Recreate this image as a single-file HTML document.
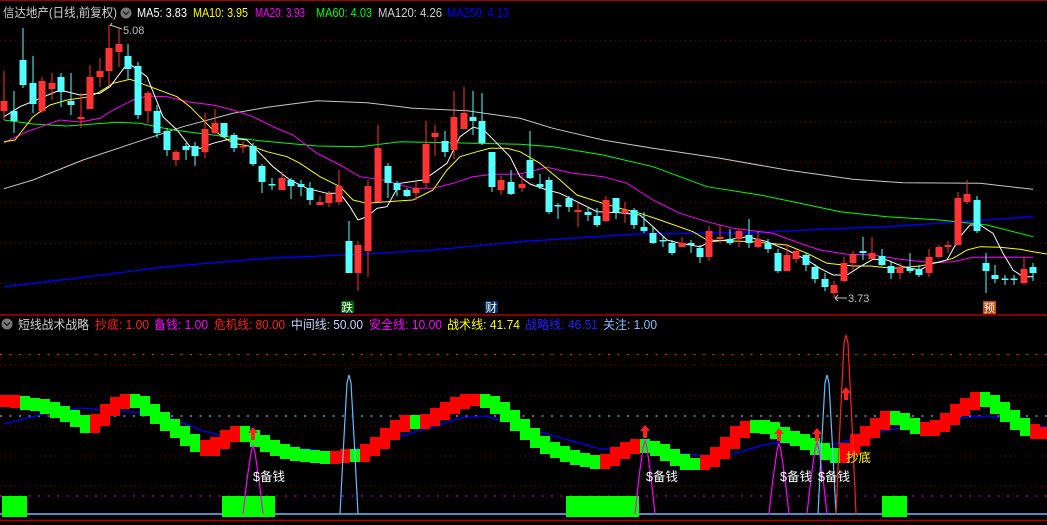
<!DOCTYPE html>
<html><head><meta charset="utf-8"><style>
html,body{margin:0;padding:0;background:#000;width:1047px;height:525px;overflow:hidden}
svg{display:block}
text{font-family:"Liberation Sans","Noto Sans CJK SC",sans-serif}
</style></head><body>
<svg id="s" width="1047" height="525" xmlns="http://www.w3.org/2000/svg">
<rect width="1047" height="525" fill="#000"/>
<line x1="0" y1="0.5" x2="1047" y2="0.5" stroke="#a00000"/>
<g id="grid"></g>
<g id="ma"></g>
<g id="cdl"></g>
<g id="low"></g>
<line x1="0" y1="315" x2="1047" y2="315" stroke="#b00000" stroke-width="1.5"/>
<line x1="0" y1="520.5" x2="1047" y2="520.5" stroke="#b00000" stroke-width="1.5"/>
<g font-size="12.5" lengthAdjust="spacingAndGlyphs">
<text x="3" y="17" fill="#d0d0d0" textLength="114" lengthAdjust="spacingAndGlyphs">信达地产(日线,前复权)</text>
<text x="137" y="17" fill="#fff" textLength="50" lengthAdjust="spacingAndGlyphs">MA5: 3.83</text>
<text x="193" y="17" fill="#ffff00" textLength="55" lengthAdjust="spacingAndGlyphs">MA10: 3.95</text>
<text x="255" y="17" fill="#ff00ff" textLength="50" lengthAdjust="spacingAndGlyphs">MA20: 3.93</text>
<text x="316" y="17" fill="#00ff00" textLength="56" lengthAdjust="spacingAndGlyphs">MA60: 4.03</text>
<text x="378" y="17" fill="#d0d0d0" textLength="64" lengthAdjust="spacingAndGlyphs">MA120: 4.26</text>
<text x="447" y="17" fill="#0000ff" textLength="62" lengthAdjust="spacingAndGlyphs">MA250: 4.13</text>
</g>
<circle cx="126" cy="13" r="5.5" fill="#777"/><path d="M123,11.5 L126,14.5 L129,11.5" stroke="#222" stroke-width="1.5" fill="none"/>
<text x="123" y="34" font-size="11" fill="#c0c0c0">5.08</text>
<path d="M110,26 L112,23 M110,25 L122,29" stroke="#c0c0c0" fill="none"/>
<text x="848" y="302" font-size="11" fill="#c0c0c0">3.73</text>
<path d="M835,298 L847,298 M835,298 L838,295 M835,298 L838,301" stroke="#c0c0c0" fill="none"/>
<rect x="341" y="301" width="13" height="12" fill="#006600"/><text x="341.5" y="311.5" font-size="11.5" fill="#fff">跌</text>
<rect x="485" y="301" width="13" height="12" fill="#003366"/><text x="485.5" y="311.5" font-size="11.5" fill="#fff">财</text>
<rect x="983" y="301" width="13" height="13" fill="#c04a10"/><text x="983.5" y="312" font-size="11.5" fill="#fff">预</text>
<circle cx="7" cy="324" r="5.5" fill="#777"/><path d="M4,322.5 L7,325.5 L10,322.5" stroke="#222" stroke-width="1.5" fill="none"/>
<g font-size="12.5">
<text x="18" y="329" fill="#d0d0d0" textLength="71" lengthAdjust="spacingAndGlyphs">短线战术战略</text>
<text x="95" y="329" fill="#ff2020" textLength="54" lengthAdjust="spacingAndGlyphs">抄底: 1.00</text>
<text x="154" y="329" fill="#ff00ff" textLength="54" lengthAdjust="spacingAndGlyphs">备钱: 1.00</text>
<text x="214" y="329" fill="#ff2020" textLength="71" lengthAdjust="spacingAndGlyphs">危机线: 80.00</text>
<text x="291" y="329" fill="#d0d0ff" textLength="72" lengthAdjust="spacingAndGlyphs">中间线: 50.00</text>
<text x="369" y="329" fill="#ff00ff" textLength="73" lengthAdjust="spacingAndGlyphs">安全线: 10.00</text>
<text x="447" y="329" fill="#ffff00" textLength="73" lengthAdjust="spacingAndGlyphs">战术线: 41.74</text>
<text x="525" y="329" fill="#2020ff" textLength="73" lengthAdjust="spacingAndGlyphs">战略线: 46.51</text>
<text x="603" y="329" fill="#80c0ff" textLength="54" lengthAdjust="spacingAndGlyphs">关注: 1.00</text>
</g>
<g id="lbl"></g>
</svg>
<script>
var NS="http://www.w3.org/2000/svg";
function el(p,t,a){var e=document.createElementNS(NS,t);for(var k in a)e.setAttribute(k,a[k]);document.getElementById(p).appendChild(e);return e;}
[40.7,81.7,121.7,162.7,202.7,243.3,283.3,365,395.7,426.3,456,486.3].forEach(function(y){el("grid","line",{x1:0,x2:1047,y1:y,y2:y,stroke:"#900000","stroke-dasharray":"1 4"});});
el("grid","line",{x1:0,x2:1047,y1:354.5,y2:354.5,stroke:"#ff2020","stroke-dasharray":"2 7.5"});
el("grid","line",{x1:0,x2:1047,y1:416,y2:416,stroke:"#d0d0ff","stroke-dasharray":"2 7.5"});
el("grid","line",{x1:0,x2:1047,y1:496,y2:496,stroke:"#ff00ff","stroke-dasharray":"2 7.5"});
el("grid","line",{x1:0,x2:1047,y1:514,y2:514,stroke:"#60c0ff","stroke-width":1.5});
function pl(g,pts,c,w){el(g,"polyline",{points:pts,stroke:c,fill:"none","stroke-width":w||1});}
pl("ma","4,188.7 33,180 83,160 133,143.3 183,126.7 233,113.3 267,107.3 317,100.7 367,102.7 413,108.3 467,110.7 520,118.3 553,128.3 603,140 653,148.3 720,158.3 787,170 853,179.3 903,182.7 980,183.3 1033,189.3","#c8c8c8");
pl("ma","4,286.7 67,279.3 167,266.7 267,258.3 367,254 433,250 520,241.7 637,234 753,232.7 820,229.3 887,226.7 953,222.3 1033,216.7","#0000ff",1.3);
pl("ma","4,120 33,124 67,126 117,122.3 140,123.3 173,130 213,135 260,140.7 317,146 360,146.7 400,141.7 450,142.7 520,144.3 553,146.7 603,155 653,166.7 707,186.7 760,195 800,203.3 840,211.7 887,216.7 940,220 987,225 1033,236.7","#00ff00");
pl("ma","4,142.7 27,131.7 60,120 80,122 100,118.3 113,110 133,100 147,96 167,96.7 187,101.7 213,105 233,110 253,116.7 273,126.7 293,135 317,153.3 340,165 360,176.7 383,180 413,188.3 433,188.3 453,183.3 473,176.7 493,174.3 520,174 547,167.3 570,172.7 603,176.7 627,183.3 653,200 680,213.3 707,221.7 733,228.3 753,230.7 773,233.3 800,243.3 820,250 847,254.3 873,255 900,259.3 933,262.7 953,261.7 973,257.3 1000,257.3 1033,257.3","#ff00ff");
pl("ma","4,141.7 15,140 33,116.7 50,105 67,100 90,96.7 100,91.7 113,83.3 130,79.3 150,86.7 177,96.7 190,106.7 213,130 233,143.3 253,146.7 267,151.7 287,156.7 300,163.3 320,176.7 340,186.7 353,200 367,203.3 387,201.7 413,200 433,190 447,170 460,156.7 477,151.7 490,148.3 507,148.3 520,151.7 540,163.3 560,180 577,195 603,203.3 620,208.3 640,213.3 660,220 693,231.7 707,240 753,241.7 787,245 807,253.3 827,263.3 853,266 870,266 893,268.3 920,266 937,262.7 953,258.3 967,250 980,246.7 1000,247.3 1020,249.3 1033,251.7 1047,254","#ffff00");
pl("ma","4,116.7 20,106.7 40,98.3 60,90 80,95 100,93.3 110,86.7 128,62.7 147,76.7 163,116.7 177,130 190,146.7 200,148.3 213,143.3 233,138.3 247,140 260,153.3 273,166.7 290,180 307,188.3 327,193.3 340,193.3 350,206.7 358,220 367,216.7 377,208.3 387,206.7 400,183.3 423,180 433,173.3 447,163.3 460,136.7 473,127.3 483,129.3 497,143.3 510,156.7 520,176.7 530,184 547,190 560,193.3 577,201.7 597,211.7 620,212.7 640,215 653,226.7 667,240 680,243.3 700,246.7 710,241.7 727,240 747,236.7 767,241.7 787,250 807,260 820,268.3 833,275 847,275 860,266.7 873,259.3 887,260 903,266.7 920,270 933,263.3 947,260 960,236.7 970,225 980,225 993,233.3 1003,253.3 1013,270 1023,276.7 1033,276.7","#fff");
var C=[[4,101,111,71,120,1],[14,111,121,91,133,0],[23,60,85,28,88,0],[33,83,104,56,113,0],[42,81,111,77,113,1],[52,83,89,73,100,1],[61,77,92,73,107,0],[71,101,105,73,115,0],[81,117,119,93,128,1],[90,77,109,65,109,1],[100,71,77,58,87,1],[109,48,71,25,87,1],[119,44,52,28,67,1],[128,56,69,44,80,0],[138,66,115,62,119,0],[148,93,111,91,123,1],[157,111,133,105,138,0],[167,131,150,128,156,0],[176,152,160,150,166,1],[186,146,150,143,160,0],[195,146,156,142,166,0],[205,129,152,113,158,1],[215,123,133,109,134,1],[224,123,137,123,138,0],[234,135,148,133,152,0],[243,146,147.5,141,153,1],[253,146,164,143,166,0],[262,166,182,164,193,0],[272,184,185.5,178,190,0],[282,178,190,172,190,1],[291,180,186,178,199,0],[301,184,187,180,196,0],[310,188,200,182,205,0],[320,202,205,196,205,1],[329,194,203,191,207,1],[339,186,202,170,205,1],[349,241,273,221,273,0],[358,245,273,241,291,1],[368,186,251,180,277,1],[378,148,202,125,202,1],[388,166,183,163,198,0],[397,183,190,181,196,0],[407,190,196,188,197,0],[416,188,193,182,200,1],[426,144,183,121,188,1],[435,133,137,125,156,1],[445,141,152,131,157,0],[454,117,150,91,159,1],[464,113,129,87,129,1],[473,117,121,91,135,0],[482,121,143,93,145,0],[492,152,187,152,192,0],[501,180,190,176,195,1],[511,182,194,170,195,0],[522,184,188,175,192,1],[530,160,178,131,179,0],[540,184,187,174,189,0],[549,180,212,177,214,0],[558,205,206.5,203,219,0],[569,198,207,196,212,0],[578,210,212,203,227,1],[588,212,215,208,221,0],[597,216,225,208,227,0],[606,200,221,196,222,1],[616,198,212,198,219,0],[625,210,213,202,223,1],[634,210,225,208,229,0],[644,227,231,212,233,0],[653,233,243,227,244,0],[663,240,241.5,237,247,0],[672,243,253,240,255,0],[682,243,247,237,247,1],[691,243,245,240,253,0],[700,248,257,245,263,0],[709,231,257,226,261,1],[720,237,239,225,243,1],[730,239,243,229,245,0],[739,231,239,229,247,1],[749,235,243,219,248,0],[758,239,247,231,248,1],[768,243,249,239,253,0],[778,253,271,249,273,0],[787,255,271,245,271,1],[796,251,259,249,263,1],[806,255,265,253,271,0],[815,267,279,264,283,0],[825,279,287,273,291,0],[834,285,293,281,298,1],[844,263,281,257,282,1],[853,254,263,251,271,1],[863,251,253,237,260,0],[872,253,259,237,259,1],[882,256,265,249,266,0],[891,266,273,262,279,0],[900,267,273,263,279,1],[910,268,271,253,273,0],[919,269,275,265,277,0],[929,257,273,249,277,1],[939,247,257,245,258,1],[948,245,247,241,253,1],[958,198,245,192,245,1],[967,194,202,180,204,1],[977,200,231,196,233,0],[986,263,271,253,293,0],[995,275,279,265,283,0],[1005,278.5,280,275,285,0],[1014,278.5,280,275,285,0],[1024,269,283,257,285,1],[1033,267,273,263,281,0]];
C.forEach(function(c){var col=c[5]?"#ff3333":"#55ffff";el("cdl","line",{x1:c[0],x2:c[0],y1:c[3],y2:c[4],stroke:col});var h=Math.max(c[2]-c[1],1.5);el("cdl","rect",{x:c[0]-3.5,y:c[1],width:7,height:h,fill:col});});
pl("low","4,424 40,415 80,408 130,412 160,413 200,430 230,438 300,448 330,452 345,452 380,442 400,436 430,428 460,418 485,416 520,425 550,435 580,443 600,449 630,450 660,452 700,455 720,457 740,452 760,446 780,442 800,444 830,445 850,440 880,432 900,428 930,424 960,418 990,416 1010,420 1035,425 1047,427","#0000ff",1.3);
var B=[[0,401,1],[10,402,1],[20,404,0],[30,405,0],[40,408,0],[50,412,0],[60,416,0],[70,421,0],[80,427,0],[90,420,1],[100,410,1],[110,403,1],[120,400,1],[130,402,0],[140,410,0],[150,418,0],[160,425,0],[170,432,0],[180,440,0],[190,446,0],[200,450,1],[210,443,1],[220,436,1],[230,432,1],[240,436,0],[250,441,0],[260,446,0],[270,450,0],[280,453,0],[290,455,0],[300,456,0],[310,457,0],[320,458,0],[330,457,1],[340,455,1],[350,456,0],[360,450,1],[370,443,1],[380,434,1],[390,426,1],[400,421,1],[410,423,0],[420,420,1],[430,414,1],[440,408,1],[450,403,1],[460,400,1],[470,400,1],[480,402,0],[490,408,0],[500,416,0],[510,425,0],[520,434,0],[530,442,0],[540,448,0],[550,452,0],[560,456,0],[570,459,0],[580,461,0],[590,463,0],[600,460,1],[610,453,1],[620,448,1],[630,445,1],[640,447,0],[650,450,0],[660,455,0],[670,460,0],[680,464,0],[690,464,0],[700,461,1],[710,453,1],[720,443,1],[730,432,1],[740,427,1],[750,426,0],[760,428,0],[770,433,0],[780,437,0],[790,440,0],[800,444,0],[810,449,0],[820,454,0],[830,457,0],[840,449,1],[850,440,1],[860,432,1],[870,424,1],[880,417,1],[890,419,0],[900,424,0],[910,428,0],[920,430,1],[930,426,1],[940,419,1],[950,410,1],[960,404,1],[970,398,1],[980,401,0],[990,408,0],[1000,416,0],[1010,424,0],[1020,430,0],[1030,433,1],[1040,433,1]];
B.forEach(function(b,i){var py=i?B[i-1][1]:b[1];var top=Math.min(b[1],py)-6,bot=Math.max(b[1],py)+6;el("low","rect",{x:b[0],y:top,width:10,height:bot-top,fill:b[2]?"#ff0000":"#00ff00"});});
[[2,27],[222,275],[566,639],[882,907]].forEach(function(g){el("low","rect",{x:g[0],y:496,width:g[1]-g[0],height:21,fill:"#00ff00"});});
function spike(x,pk,w,col){el("low","polyline",{points:(x-w)+",514 "+(x-w*0.6)+","+(514-(514-pk)*0.5)+" "+(x-2)+","+(pk+8)+" "+x+","+pk+" "+(x+2)+","+(pk+8)+" "+(x+w*0.6)+","+(514-(514-pk)*0.5)+" "+(x+w)+",514",stroke:col,fill:"none","stroke-width":1.2});}
spike(253,445,10,"#ff00ff");spike(645,440,10,"#ff00ff");spike(779,443,10,"#ff00ff");spike(817,442,10,"#ff00ff");
spike(349,375,9,"#60c0ff");spike(827,375,9,"#60c0ff");spike(846,335,10,"#ff2020");
function arrow(x,y){el("low","path",{d:"M"+x+","+y+" l-5,6 h3 v7 h4 v-7 h3 z",fill:"#ff2020"});}
arrow(253,427);arrow(645,425);arrow(779,428);arrow(817,428);arrow(846,387);
function t(x,y,s,c){var e=el("lbl","text",{x:x,y:y,"font-size":12.5,fill:c});e.textContent=s;}
t(253,481,"$备钱","#fff");t(646,481,"$备钱","#fff");t(780,481,"$备钱","#fff");t(818,481,"$备钱","#fff");t(846,462,"抄底","#ffff00");
</script>
</body></html>
